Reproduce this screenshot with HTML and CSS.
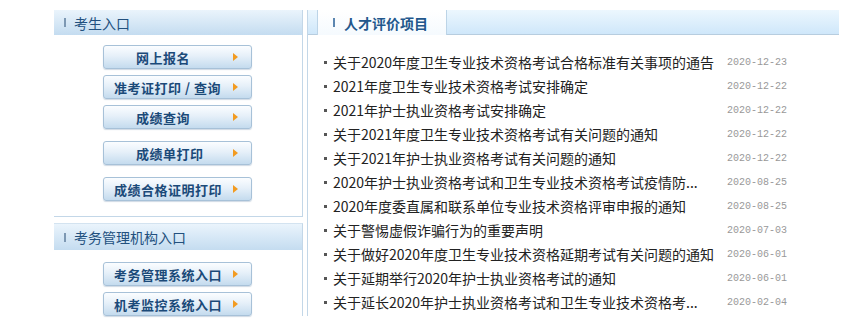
FILE: index.html
```html
<!DOCTYPE html>
<html>

<head>
    <meta charset="utf-8">
    <title>人才评价</title>
    <link rel="stylesheet" href="styles.css">
</head>

<body>
    <div class="page">
        <aside class="side">
            <section class="box">
                <h2 class="box-hd"><i class="mark"></i>考生入口</h2>
                <div class="box-bd">
                    <a class="btn indent" href="#">网上报名<span class="arr"></span></a>
                    <a class="btn" href="#">准考证打印 / 查询<span class="arr"></span></a>
                    <a class="btn indent" href="#">成绩查询<span class="arr"></span></a>
                    <a class="btn indent wide" href="#">成绩单打印<span class="arr"></span></a>
                    <a class="btn wide" href="#">成绩合格证明打印<span class="arr"></span></a>
                </div>
            </section>
            <section class="box box-last">
                <h2 class="box-hd"><i class="mark"></i>考务管理机构入口</h2>
                <div class="box-bd">
                    <a class="btn" href="#">考务管理系统入口<span class="arr"></span></a>
                    <a class="btn" href="#">机考监控系统入口<span class="arr"></span></a>
                </div>
            </section>
        </aside>

        <section class="news">
            <div class="news-hd">
                <h2 class="tab"><i class="mark"></i>人才评价项目</h2>
            </div>
            <ul class="news-list">
                <li><a href="#">关于2020年度卫生专业技术资格考试合格标准有关事项的通告</a><span class="date">2020-12-23</span></li>
                <li><a href="#">2021年度卫生专业技术资格考试安排确定</a><span class="date">2020-12-22</span></li>
                <li><a href="#">2021年护士执业资格考试安排确定</a><span class="date">2020-12-22</span></li>
                <li><a href="#">关于2021年度卫生专业技术资格考试有关问题的通知</a><span class="date">2020-12-22</span></li>
                <li><a href="#">关于2021年护士执业资格考试有关问题的通知</a><span class="date">2020-12-22</span></li>
                <li><a href="#">2020年护士执业资格考试和卫生专业技术资格考试疫情防...</a><span class="date">2020-08-25</span></li>
                <li><a href="#">2020年度委直属和联系单位专业技术资格评审申报的通知</a><span class="date">2020-08-25</span></li>
                <li><a href="#">关于警惕虚假诈骗行为的重要声明</a><span class="date">2020-07-03</span></li>
                <li><a href="#">关于做好2020年度卫生专业技术资格延期考试有关问题的通知</a><span class="date">2020-06-01</span></li>
                <li><a href="#">关于延期举行2020年护士执业资格考试的通知</a><span class="date">2020-06-01</span></li>
                <li><a href="#">关于延长2020年护士执业资格考试和卫生专业技术资格考...</a><span class="date">2020-02-04</span></li>
            </ul>
        </section>
    </div>
</body>

</html>
```

FILE: styles.css
```css
* {
    margin: 0;
    padding: 0;
    box-sizing: border-box;
}

html,
body {
    width: 100%;
    height: 100%;
    background-color: #ffffff;
    overflow: hidden;
}

body {
    font-family: "Noto Sans CJK SC", "Noto Sans", sans-serif;
    color: #222222;
}

a {
    text-decoration: none;
}

.page {
    display: flex;
    gap: 4px;
    padding: 10px 0 0 54px;
}

/* left column */
.side {
    width: 249px;
}

.box {
    border-right: 1px solid #c3d7e8;
    border-bottom: 1px solid #c3d7e8;
}

.box-last {
    margin-top: 6px;
    border-top: 1px solid #d3e3f0;
    border-bottom: 0;
}

.box-hd {
    display: flex;
    align-items: center;
    height: 25px;
    padding-left: 10px;
    font-size: 14px;
    font-weight: normal;
    color: #22507e;
    background: linear-gradient(#eaf4fc, #c4dcf0);
}

.box-last .box-hd {
    height: 26px;
}

.mark {
    display: inline-block;
    width: 2px;
    height: 9px;
    margin-right: 8px;
    background-color: #7d98b3;
}

.box-bd {
    display: flex;
    flex-direction: column;
    align-items: flex-start;
    gap: 6px;
    padding: 10px 0 15px 49px;
}

.box-last .box-bd {
    padding-top: 12px;
    padding-bottom: 0;
}

.btn {
    display: flex;
    align-items: center;
    width: 149px;
    height: 24px;
    padding-left: 10px;
    border: 1px solid #a7c1d8;
    border-radius: 3px;
    background: linear-gradient(#fbfdff, #e6f0f9 45%, #c4dbee);
    box-shadow: 0 1px 1px rgba(120, 150, 180, 0.35);
    color: #1b4a79;
    font-size: 13px;
    font-weight: bold;
    letter-spacing: 0.5px;
    white-space: nowrap;
}

.btn.indent {
    padding-left: 32px;
}

.btn.wide {
    margin-top: 6px;
}

.arr {
    margin-left: auto;
    margin-right: 13px;
    width: 0;
    height: 0;
    border-left: 5px solid #f29b21;
    border-top: 4px solid transparent;
    border-bottom: 4px solid transparent;
}

/* right column */
.news {
    width: 532px;
    border-left: 1px solid #c3d7e8;
}

.news-hd {
    height: 25px;
    padding-left: 9px;
    background: linear-gradient(#ecf7fe, #cfe7fa);
    border-bottom: 1px solid #b7cddf;
}

.tab {
    display: flex;
    align-items: center;
    width: 130px;
    height: 25px;
    padding-left: 15px;
    background: linear-gradient(#ffffff, #f5fafe);
    border-left: 1px solid #bcd4e7;
    border-right: 1px solid #bcd4e7;
    font-size: 14px;
    font-weight: bold;
    color: #22578c;
}

.tab .mark {
    margin-right: 9px;
    background-color: #5c86b0;
}

.news-list {
    list-style: none;
    padding: 15px 0 0 16px;
}

.news-list li {
    display: flex;
    align-items: center;
    height: 24px;
    font-size: 14px;
}

.news-list li::before {
    content: "";
    width: 3px;
    height: 3px;
    margin-right: 6px;
    background-color: #555555;
}

.news-list a {
    flex: 1;
    color: #222222;
    white-space: nowrap;
    overflow: hidden;
}

.date {
    width: 112px;
    font-family: "Liberation Mono", monospace;
    font-size: 10px;
    color: #999999;
}
```
